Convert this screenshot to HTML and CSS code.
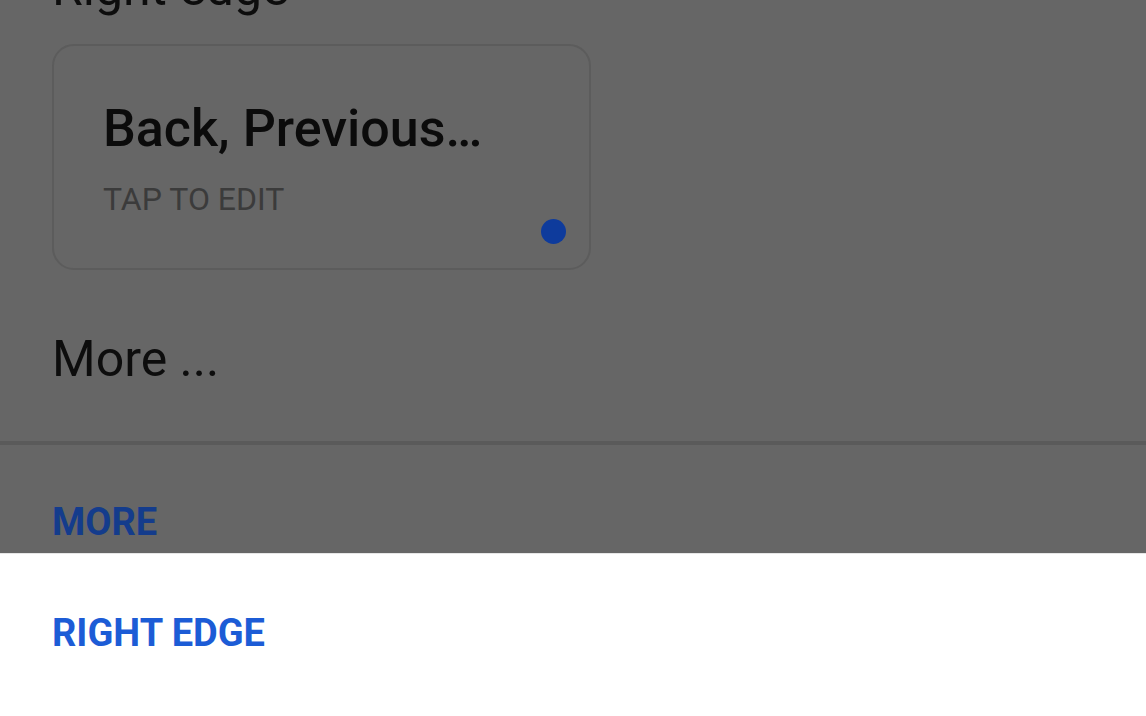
FILE: index.html
```html
<!DOCTYPE html>
<html lang="en">
<head>
    <meta charset="UTF-8">
    <meta name="viewport" content="width=device-width, initial-scale=1.0">
    <title>Right edge</title>
    <link rel="stylesheet" href="styles.css">
</head>
<body>

<div class="page">
    <h2 class="section-title">Right edge</h2>

    <!-- Thẻ hành động -->
    <div class="card">
        <div class="card-title">Back, Previous…</div>
        <div class="card-hint">TAP TO EDIT</div>
        <span class="dot"></span>
    </div>

    <h2 class="section-title more-title">More ...</h2>

    <div class="divider"></div>

    <button class="link-btn dim">MORE</button>
</div>

<!-- Bảng dưới -->
<div class="sheet">
    <button class="link-btn">RIGHT EDGE</button>
</div>

</body>
</html>
```

FILE: styles.css
```css
html, body {
    margin: 0;
    height: 716px;
    overflow: hidden;
}
body {
    font-family: Roboto, "Noto Sans", sans-serif;
    background-color: #666;
    display: flex;
    flex-direction: column;
}
.page {
    background-color: #666;
    padding-bottom: 8px;
}
.section-title {
    margin: -42px 0 0 52px;
    font-size: 50px;
    font-weight: 400;
    line-height: 60px;
    color: #0d0d0d;
}
.more-title {
    margin-top: 59px;
}
.card {
    display: flex;
    flex-direction: column;
    width: 463px;
    margin: 26px 0 0 52px;
    padding: 53px 23px 24px 49px;
    border: 2px solid #5c5c5c;
    border-radius: 22px;
}
.card-title {
    font-size: 52px;
    font-weight: 500;
    line-height: 60px;
    color: #0b0b0b;
}
.card-hint {
    margin-top: 20px;
    font-size: 32px;
    line-height: 40px;
    color: #3b3b3b;
}
.dot {
    align-self: flex-end;
    width: 25px;
    height: 25px;
    border-radius: 50%;
    background-color: #0e3b9c;
}
.divider {
    height: 4px;
    margin-top: 52px;
    background-color: #5a5a5a;
}
.link-btn {
    display: block;
    margin: 54px 0 0 52px;
    padding: 0;
    border: none;
    background: none;
    font-family: inherit;
    font-size: 38px;
    font-weight: 700;
    line-height: 46px;
    color: #1c5cd6;
    cursor: pointer;
}
.link-btn.dim {
    color: #143c8c;
}
.sheet {
    flex: 1;
    background-color: #fff;
    border-top: 1px solid #e6e6e6;
    padding-top: 56px;
}
.sheet .link-btn {
    margin-top: 0;
}
```
